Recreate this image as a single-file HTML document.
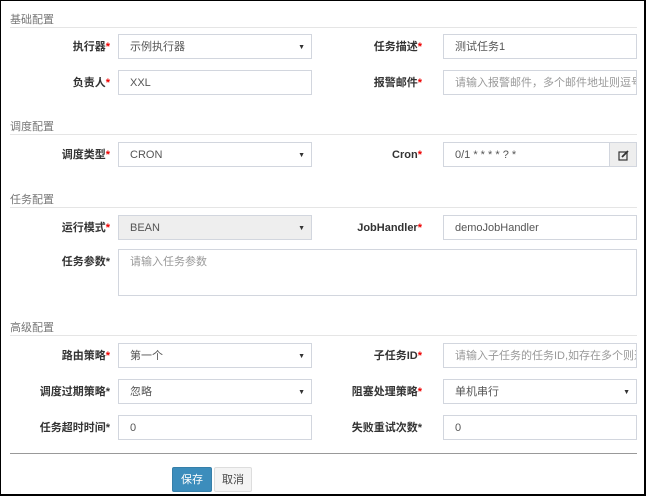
<!DOCTYPE html>
<html><head><meta charset="utf-8"><style>
*{box-sizing:border-box}
body{margin:0;width:646px;height:496px;overflow:hidden;background:#fff;font-family:"Liberation Sans","Noto Sans CJK SC",sans-serif;font-size:11px;color:#333}
.frame{position:absolute;left:0;top:0;width:646px;height:496px;border:1px solid #000;border-right-width:2px;border-bottom-width:2px}
.sec{position:absolute;left:10px;width:627px;border-bottom:1px solid #e5e5e5;color:#777;font-size:11px;height:16px;line-height:16px}
.lbl{position:absolute;text-align:right;font-weight:bold;font-size:11px;line-height:26px;color:#333}
.lbl i{color:#e00;font-style:normal}
.in{position:absolute;height:25px;border:1px solid #d2d6de;background:#fff;line-height:25px;padding-left:11px;font-size:11px;color:#555}
.ph{color:#999}
.sel:after{content:"▼";position:absolute;right:6px;top:0;font-size:7px;color:#333}
.dis{background:#eee}
.hr{position:absolute;left:10px;width:627px;top:453px;border-top:1px solid #999}
.btn{position:absolute;top:467px;height:25px;line-height:25px;text-align:center;font-size:11px;border:1px solid;border-radius:2px}
</style></head><body>
<div class="sec" style="top:12px">基础配置</div>
<div class="lbl" style="left:20px;width:90px;top:34px">执行器<i>*</i></div>
<div class="in sel" style="left:118px;top:34px;width:194px">示例执行器</div>
<div class="lbl" style="left:330px;width:92px;top:34px">任务描述<i>*</i></div>
<div class="in" style="left:443px;top:34px;width:194px">测试任务1</div>
<div class="lbl" style="left:20px;width:90px;top:70px">负责人<i>*</i></div>
<div class="in" style="left:118px;top:70px;width:194px">XXL</div>
<div class="lbl" style="left:330px;width:92px;top:70px">报警邮件<i>*</i></div>
<div class="in ph" style="left:443px;top:70px;width:194px;overflow:hidden;white-space:nowrap">请输入报警邮件，多个邮件地址则逗号分</div>

<div class="sec" style="top:119px">调度配置</div>
<div class="lbl" style="left:20px;width:90px;top:142px">调度类型<i>*</i></div>
<div class="in sel" style="left:118px;top:142px;width:194px">CRON</div>
<div class="lbl" style="left:330px;width:92px;top:142px">Cron<i>*</i></div>
<div class="in" style="left:443px;top:142px;width:167px">0/1 * * * * ? *</div>
<div class="in" style="left:609px;top:142px;width:28px;background:#eee;padding:0;text-align:center">
<svg width="11" height="11" viewBox="0 0 11 11" style="margin-top:7px;display:inline-block"><rect x="1" y="2" width="8" height="8" fill="none" stroke="#333" stroke-width="1.2"/><path d="M4 7 L10 1" stroke="#333" stroke-width="1.8"/></svg></div>

<div class="sec" style="top:192px">任务配置</div>
<div class="lbl" style="left:20px;width:90px;top:215px">运行模式<i>*</i></div>
<div class="in sel dis" style="left:118px;top:215px;width:194px">BEAN</div>
<div class="lbl" style="left:330px;width:92px;top:215px">JobHandler<i>*</i></div>
<div class="in" style="left:443px;top:215px;width:194px">demoJobHandler</div>
<div class="lbl" style="left:20px;width:90px;top:249px">任务参数<i style="color:#333">*</i></div>
<div class="in ph" style="left:118px;top:249px;width:519px;height:47px">请输入任务参数</div>

<div class="sec" style="top:320px">高级配置</div>
<div class="lbl" style="left:20px;width:90px;top:343px">路由策略<i>*</i></div>
<div class="in sel" style="left:118px;top:343px;width:194px">第一个</div>
<div class="lbl" style="left:330px;width:92px;top:343px">子任务ID<i>*</i></div>
<div class="in ph" style="left:443px;top:343px;width:194px;overflow:hidden;white-space:nowrap">请输入子任务的任务ID,如存在多个则逗号</div>
<div class="lbl" style="left:10px;width:100px;top:379px">调度过期策略<i style="color:#333">*</i></div>
<div class="in sel" style="left:118px;top:379px;width:194px">忽略</div>
<div class="lbl" style="left:320px;width:102px;top:379px">阻塞处理策略<i>*</i></div>
<div class="in sel" style="left:443px;top:379px;width:194px">单机串行</div>
<div class="lbl" style="left:10px;width:100px;top:415px">任务超时时间<i style="color:#333">*</i></div>
<div class="in" style="left:118px;top:415px;width:194px">0</div>
<div class="lbl" style="left:320px;width:102px;top:415px">失败重试次数<i style="color:#333">*</i></div>
<div class="in" style="left:443px;top:415px;width:194px">0</div>

<div class="hr"></div>
<div class="btn" style="left:172px;width:40px;background:#3c8dbc;border-color:#367fa9;color:#fff">保存</div>
<div class="btn" style="left:214px;width:38px;background:#f4f4f4;border-color:#ddd;color:#444">取消</div>
<div class="frame"></div>
</body></html>
